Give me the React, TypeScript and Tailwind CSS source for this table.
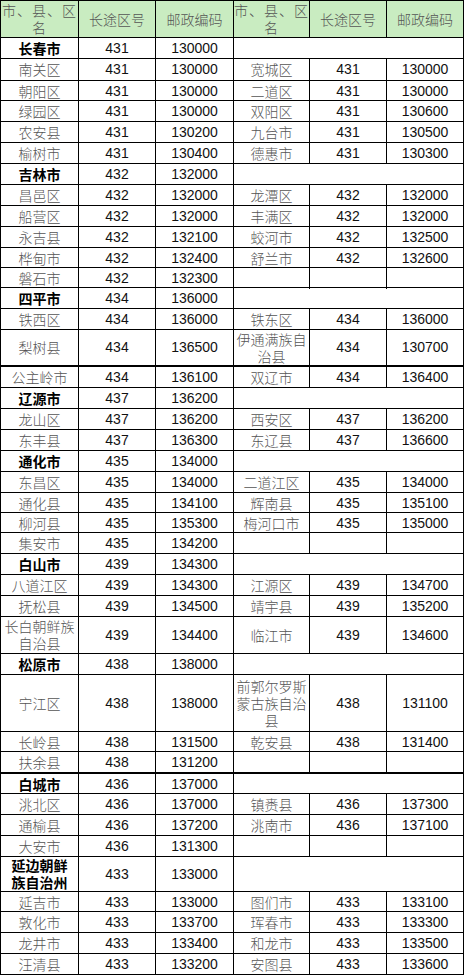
import React from "react";

type Cells = [string, string, string];

type Row = {
  h: string;
  left: Cells;
  bold?: boolean;
  right?: Cells | "merged" | "empty";
  thick?: boolean;
};

const rows: Row[] = [
  { h: "h-[21px]", left: ["长春市", "431", "130000"], bold: true, right: "merged" },
  { h: "h-[22px]", left: ["南关区", "431", "130000"], right: ["宽城区", "431", "130000"] },
  { h: "h-[20px]", left: ["朝阳区", "431", "130000"], right: ["二道区", "431", "130000"] },
  { h: "h-[21px]", left: ["绿园区", "431", "130000"], right: ["双阳区", "431", "130600"] },
  { h: "h-[21px]", left: ["农安县", "431", "130200"], right: ["九台市", "431", "130500"] },
  { h: "h-[21px]", left: ["榆树市", "431", "130400"], right: ["德惠市", "431", "130300"] },
  { h: "h-[21px]", left: ["吉林市", "432", "132000"], bold: true, right: "merged" },
  { h: "h-[21px]", left: ["昌邑区", "432", "132000"], right: ["龙潭区", "432", "132000"] },
  { h: "h-[21px]", left: ["船营区", "432", "132000"], right: ["丰满区", "432", "132000"] },
  { h: "h-[21px]", left: ["永吉县", "432", "132100"], right: ["蛟河市", "432", "132500"] },
  { h: "h-[20px]", left: ["桦甸市", "432", "132400"], right: ["舒兰市", "432", "132600"] },
  { h: "h-[20px]", left: ["磐石市", "432", "132300"], right: "empty" },
  { h: "h-[21px]", left: ["四平市", "434", "136000"], bold: true, right: "merged" },
  { h: "h-[21px]", left: ["铁西区", "434", "136000"], right: ["铁东区", "434", "136000"] },
  { h: "h-[37px]", left: ["梨树县", "434", "136500"], right: ["伊通满族自\n治县", "434", "130700"], thick: true },
  { h: "h-[21px]", left: ["公主岭市", "434", "136100"], right: ["双辽市", "434", "136400"] },
  { h: "h-[21px]", left: ["辽源市", "437", "136200"], bold: true, right: "merged" },
  { h: "h-[21px]", left: ["龙山区", "437", "136200"], right: ["西安区", "437", "136200"] },
  { h: "h-[21px]", left: ["东丰县", "437", "136300"], right: ["东辽县", "437", "136600"] },
  { h: "h-[21px]", left: ["通化市", "435", "134000"], bold: true, right: "merged" },
  { h: "h-[21px]", left: ["东昌区", "435", "134000"], right: ["二道江区", "435", "134000"] },
  { h: "h-[20px]", left: ["通化县", "435", "134100"], right: ["辉南县", "435", "135100"] },
  { h: "h-[20px]", left: ["柳河县", "435", "135300"], right: ["梅河口市", "435", "135000"] },
  { h: "h-[21px]", left: ["集安市", "435", "134200"], right: "empty" },
  { h: "h-[21px]", left: ["白山市", "439", "134300"], bold: true, right: "merged" },
  { h: "h-[21px]", left: ["八道江区", "439", "134300"], right: ["江源区", "439", "134700"] },
  { h: "h-[21px]", left: ["抚松县", "439", "134500"], right: ["靖宇县", "439", "135200"] },
  { h: "h-[37px]", left: ["长白朝鲜族\n自治县", "439", "134400"], right: ["临江市", "439", "134600"] },
  { h: "h-[21px]", left: ["松原市", "438", "138000"], bold: true, right: "merged" },
  { h: "h-[57px]", left: ["宁江区", "438", "138000"], right: ["前郭尔罗斯\n蒙古族自治\n县", "438", "131100"] },
  { h: "h-[20px]", left: ["长岭县", "438", "131500"], right: ["乾安县", "438", "131400"] },
  { h: "h-[22px]", left: ["扶余县", "438", "131200"], right: "empty", thick: true },
  { h: "h-[20px]", left: ["白城市", "436", "137000"], bold: true, right: "merged" },
  { h: "h-[21px]", left: ["洮北区", "436", "137000"], right: ["镇赉县", "436", "137300"] },
  { h: "h-[21px]", left: ["通榆县", "436", "137200"], right: ["洮南市", "436", "137100"] },
  { h: "h-[21px]", left: ["大安市", "436", "131300"], right: "empty" },
  { h: "h-[35px]", left: ["延边朝鲜\n族自治州", "433", "133000"], bold: true, right: "merged" },
  { h: "h-[20px]", left: ["延吉市", "433", "133000"], right: ["图们市", "433", "133100"] },
  { h: "h-[21px]", left: ["敦化市", "433", "133700"], right: ["珲春市", "433", "133300"] },
  { h: "h-[21px]", left: ["龙井市", "433", "133400"], right: ["和龙市", "433", "133500"] },
  { h: "h-[21px]", left: ["汪清县", "433", "133200"], right: ["安图县", "433", "133600"] },
];

const grid = "grid grid-cols-[78px_77px_78px_76px_77px_77px]";
const cell = "flex items-center justify-center text-center border-r border-black";
const nameFont = "font-['Noto_Sans_CJK_SC',sans-serif] text-[14px] leading-[17px] whitespace-pre-line";
const numFont = "font-['Liberation_Sans',Arial,sans-serif] text-[14px] text-[#111]";

function Name({ text, bold }: { text: string; bold?: boolean }) {
  return (
    <div className={`${cell} ${nameFont} ${bold ? "font-bold text-black" : "font-light text-[#555]"}`}>
      {text}
    </div>
  );
}

function Num({ text }: { text: string }) {
  return <div className={`${cell} ${numFont}`}>{text}</div>;
}

export default function App() {
  return (
    <div className="w-[464px] bg-white">
      <div className="border-l border-t border-black w-[464px]">
        {/* header */}
        <div className={`${grid} h-[37px] border-b border-black bg-[#c9ecc1]`}>
          {[0, 1].map((i) => (
            <React.Fragment key={i}>
              <div className={`${cell} ${nameFont} font-light text-[#555] tracking-[1px]`}>{"市、县、区\n名"}</div>
              <div className={`${cell} ${nameFont} font-light text-[#555]`}>长途区号</div>
              <div className={`${cell} ${nameFont} font-light text-[#555]`}>邮政编码</div>
            </React.Fragment>
          ))}
        </div>

        {rows.map((r, i) => (
          <div
            key={i}
            className={`${grid} ${r.h} ${r.thick ? "border-b-2" : "border-b"} border-black`}
          >
            <Name text={r.left[0]} bold={r.bold} />
            <Num text={r.left[1]} />
            <Num text={r.left[2]} />
            {r.right === "merged" ? (
              <div className={`${cell} col-span-3`} />
            ) : r.right === "empty" ? (
              <>
                <div className={cell} />
                <div className={cell} />
                <div className={cell} />
              </>
            ) : r.right ? (
              <>
                <Name text={r.right[0]} />
                <Num text={r.right[1]} />
                <Num text={r.right[2]} />
              </>
            ) : null}
          </div>
        ))}
      </div>
    </div>
  );
}
